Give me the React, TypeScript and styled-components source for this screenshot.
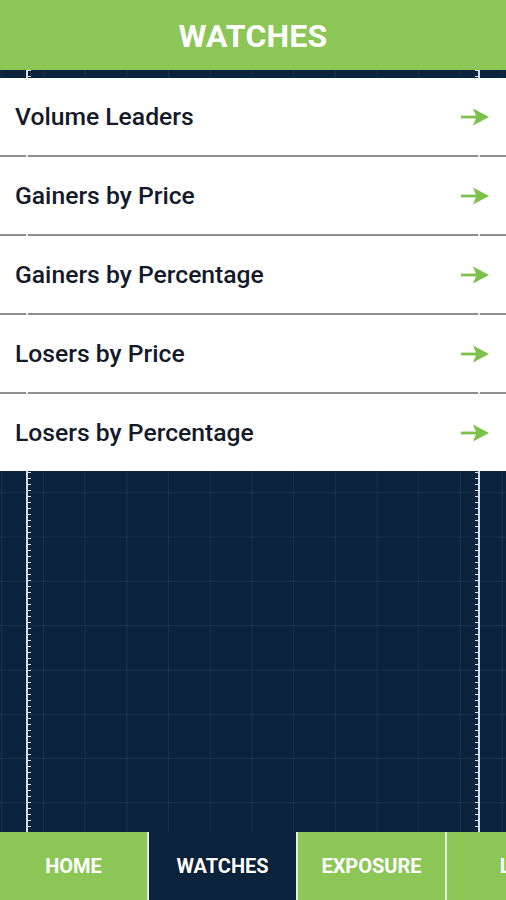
import React from "react";
import styled, { createGlobalStyle } from "styled-components";

const GlobalStyle = createGlobalStyle`
  html, body { margin: 0; padding: 0; background: #0b233d; }
  body { font-family: Roboto, "Noto Sans", "Liberation Sans", sans-serif; }
  * { box-sizing: border-box; }
`;

const NAVY = "#0b233d";
const GREEN = "#8bc657";
const GRID = "rgba(120, 150, 180, 0.13)";
const AXIS = "#d8dee6";

const Page = styled.div`
  width: 506px;
  height: 900px;
  display: flex;
  flex-direction: column;
  overflow: hidden;
  background-color: ${NAVY};
`;

const Header = styled.header`
  height: 70px;
  flex: none;
  background: ${GREEN};
  display: flex;
  align-items: center;
  justify-content: center;
`;

const Title = styled.h1`
  margin: 0;
  padding-top: 2px;
  color: #ffffff;
  font-size: 32px;
  font-weight: 700;
  letter-spacing: 0.2px;
`;

const ChartArea = styled.main`
  flex: 1;
  display: flex;
  flex-direction: column;
  padding-top: 8px;
  background-color: ${NAVY};
  background-image:
    linear-gradient(${AXIS}, ${AXIS}),
    repeating-linear-gradient(to bottom, ${AXIS} 0 1px, transparent 1px 6px),
    linear-gradient(${AXIS}, ${AXIS}),
    repeating-linear-gradient(to bottom, ${AXIS} 0 1px, transparent 1px 6px),
    linear-gradient(to right, ${GRID} 0 1px, transparent 1px),
    linear-gradient(to bottom, ${GRID} 0 1px, transparent 1px);
  background-size:
    2px 100%,
    3px 100%,
    2px 100%,
    3px 100%,
    41.7px 100%,
    100% 44.3px;
  background-position:
    26px 0,
    28px 0,
    478px 0,
    475px 0,
    1.3px 0,
    0 -65px;
  background-repeat: no-repeat, no-repeat, no-repeat, no-repeat, repeat-x, repeat-y;
`;

const List = styled.ul`
  list-style: none;
  margin: 0;
  padding: 0;
  display: flex;
  flex-direction: column;
  gap: 2px;
  background-color: #8f8f8f;
  background-image:
    linear-gradient(#e6e6e6, #e6e6e6),
    linear-gradient(#e6e6e6, #e6e6e6);
  background-size: 2px 100%, 2px 100%;
  background-position: 26px 0, 478px 0;
  background-repeat: no-repeat;
`;

const Row = styled.li`
  height: 77px;
  background: #ffffff;
  display: flex;
  align-items: center;
  justify-content: space-between;
  padding: 0 17px 0 15px;
`;

const RowLabel = styled.span`
  color: #141a2a;
  font-size: 24.7px;
  font-weight: 500;
`;

const Spacer = styled.div`
  flex: 1;
`;

const TabBar = styled.nav`
  height: 68px;
  flex: none;
  display: flex;
  overflow: hidden;
`;

const Tab = styled.div<{ $active?: boolean }>`
  flex: none;
  width: 149px;
  border-right: 2px solid #e4ecdc;
  background: ${(p) => (p.$active ? NAVY : GREEN)};
  color: #ffffff;
  display: flex;
  align-items: center;
  justify-content: center;
  font-size: 20px;
  font-weight: 700;
  white-space: nowrap;
  text-shadow: ${(p) => (p.$active ? "0 0 2px rgba(0,0,0,0.6)" : "none")};
`;

const Arrow = () => (
  <svg width="28" height="18" viewBox="0 0 28 18" aria-hidden="true">
    <path d="M0 7.6 H16 V10.4 H0 Z" fill="#7cc148" />
    <path d="M12 0.5 L28 9 L12 17.5 L15.5 9 Z" fill="#7cc148" />
  </svg>
);

const items = [
  "Volume Leaders",
  "Gainers by Price",
  "Gainers by Percentage",
  "Losers by Price",
  "Losers by Percentage",
];

const tabs = ["HOME", "WATCHES", "EXPOSURE", "LIST"];

export default function App() {
  return (
    <>
      <GlobalStyle />
      <Page>
        <Header>
          <Title>WATCHES</Title>
        </Header>
        <ChartArea>
          <List>
            {items.map((it) => (
              <Row key={it}>
                <RowLabel>{it}</RowLabel>
                <Arrow />
              </Row>
            ))}
          </List>
          <Spacer />
        </ChartArea>
        <TabBar>
          {tabs.map((t) => (
            <Tab key={t} $active={t === "WATCHES"}>
              {t}
            </Tab>
          ))}
        </TabBar>
      </Page>
    </>
  );
}
